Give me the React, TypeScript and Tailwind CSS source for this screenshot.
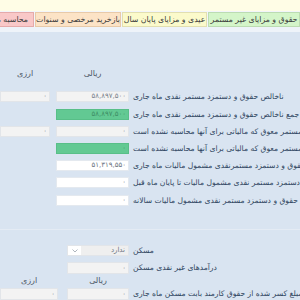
import React from "react";

const font = { fontFamily: '"DejaVu Sans", "Noto Sans", sans-serif' };

type Row = {
  mt: string;
  label: string;
  arz?: "gray" | "none";
  rial: "gray" | "green" | "white";
  value: string;
};

const rows: Row[] = [
  { mt: "mt-0", label: "ناخالص حقوق و دستمزد مستمر نقدی ماه جاری", arz: "gray", rial: "gray", value: "۵۸,۸۹۷,۵۰۰" },
  { mt: "mt-[7px]", label: "جمع ناخالص حقوق و دستمزد مستمر نقدی ماه جاری", arz: "none", rial: "green", value: "۵۸,۸۹۷,۵۰۰" },
  { mt: "mt-[6px]", label: "حقوق و دستمزد مستمر معوق که مالیاتی برای آنها محاسبه نشده است", arz: "gray", rial: "gray", value: "۰" },
  { mt: "mt-[6px]", label: "جمع حقوق و دستمزد مستمر معوق که مالیاتی برای آنها محاسبه نشده است", arz: "none", rial: "green", value: "۰" },
  { mt: "mt-[6px]", label: "حقوق و دستمزد مستمرنقدی مشمول مالیات ماه جاری", arz: "none", rial: "white", value: "۵۱,۳۱۹,۵۵۰" },
  { mt: "mt-[6px]", label: "جمع حقوق و دستمزد مستمر نقدی مشمول مالیات تا پایان ماه قبل", arz: "none", rial: "white", value: "۰" },
  { mt: "mt-[7px]", label: "حقوق و دستمزد مستمر نقدی مشمول مالیات سالانه", arz: "none", rial: "white", value: "۰" },
];

function Input({ kind, value, w }: { kind: "gray" | "green" | "white"; value: string; w: string }) {
  const cls =
    kind === "green"
      ? "bg-[#62c993] border-[#58bf88] text-[#3f8f66]"
      : kind === "white"
      ? "bg-white border-[#e4e9ef] text-[#6b7480]"
      : "bg-[#f3f3f3] border-[#e2e5e9] text-[#7a828c]";
  return (
    <div
      className={`${w} h-[11px] border ${cls} flex items-center justify-end pr-[2px] text-[7px] leading-none shrink-0`}
      dir="ltr"
    >
      {value}
    </div>
  );
}

const labelCls = "whitespace-nowrap text-[7.6px] text-[#2f4460] leading-none";
const tabCls = "shrink-0 h-[15px] border flex items-center justify-center text-[7.8px] text-[#3a3a3a] whitespace-nowrap overflow-hidden";

export default function App() {
  return (
    <div className="w-[300px] h-[300px] overflow-hidden bg-[#d9e4f1] flex flex-col" style={font}>
      <div className="h-[11px] bg-[#fffde6] shrink-0" />
      <div className="h-[16px] bg-[#f2f5fa] shrink-0 flex flex-row-reverse gap-[1px] pt-[1px] overflow-hidden">
        <div className={`w-[92px] bg-[#d4f5c9] border-[#bcdcb2] ${tabCls}`} dir="rtl">
          حقوق و مزایای غیر مستمر
        </div>
        <div className={`w-[85px] bg-[#fbfacb] border-[#e2dfb0] ${tabCls}`} dir="rtl">
          عیدی و مزایای پایان سال
        </div>
        <div className={`w-[86px] bg-[#fce3c6] border-[#e8caa8] ${tabCls}`} dir="rtl">
          بازخرید مرخصی و سنوات
        </div>
        <div className="bg-[#f9c8c8] border-[#e5aaaa] shrink-0 h-[15px] border flex items-center text-[7.8px] text-[#3a3a3a] whitespace-nowrap px-[5px]" dir="rtl">
          محاسبه مالیات حقوق
        </div>
      </div>
      <div className="h-[5px] bg-[#eef3f9] shrink-0" />

      <div className="flex-1 relative">
        <div className="flex mt-[37px] h-[10px] items-center text-[8px] text-[#4a5563]">
          <div className="w-[50px] flex justify-center" dir="rtl">ارزی</div>
          <div className="w-[6px]" />
          <div className="w-[73px] flex justify-center" dir="rtl">ریالی</div>
        </div>

        <div className="mt-[12px] flex flex-col">
          {rows.map((r, i) => (
            <div key={i} className={`flex items-center h-[11px] ${r.mt}`}>
              {r.arz === "gray" ? (
                <Input kind="gray" value="۰" w="w-[50px]" />
              ) : (
                <div className="w-[50px] shrink-0" />
              )}
              <div className="w-[6px] shrink-0" />
              <Input kind={r.rial} value={r.value} w="w-[73px]" />
              <div className="w-[4px] shrink-0" />
              <span className={labelCls} dir="rtl">
                {r.label}
              </span>
            </div>
          ))}
        </div>

        <div className="mt-[23px] border-t border-[#e4ebf4]" />

        <div className="mt-[15px] flex items-center h-[11px]">
          <div className="w-[67px] shrink-0" />
          <div className="w-[62px] h-[11px] shrink-0 border border-[#e2e5e9] bg-[#efefef] flex items-center">
            <div className="w-[13px] h-full bg-white flex items-center justify-center">
              <svg width="6" height="4" viewBox="0 0 6 4">
                <path d="M0.5 0.5 L3 3 L5.5 0.5" fill="none" stroke="#9aa3ad" strokeWidth="0.8" />
              </svg>
            </div>
            <div className="flex-1 text-right pr-[3px] text-[7px] text-[#6b7480] leading-none" dir="rtl">ندارد</div>
          </div>
          <div className="w-[4px] shrink-0" />
          <span className={labelCls} dir="rtl">مسکن</span>
        </div>

        <div className="mt-[6px] flex items-center h-[12px]">
          <div className="w-[67px] shrink-0" />
          <div className="w-[62px] h-[12px] shrink-0 border border-[#e2e5e9] bg-[#f3f3f3] flex items-center justify-end pr-[2px] text-[7px] text-[#7a828c] leading-none">۰</div>
          <div className="w-[4px] shrink-0" />
          <span className={labelCls} dir="rtl">درآمدهای غیر نقدی مسکن</span>
        </div>

        <div className="flex mt-[2px] h-[10px] items-center text-[8px] text-[#4a5563]">
          <div className="w-[58px] flex justify-center" dir="rtl">ارزی</div>
          <div className="w-[9px]" />
          <div className="w-[62px] flex justify-center" dir="rtl">ریالی</div>
        </div>

        <div className="mt-[2px] flex items-center h-[12px]">
          <div className="w-[58px] h-[12px] shrink-0 border border-[#e2e5e9] bg-[#f3f3f3] flex items-center justify-end pr-[2px] text-[7px] text-[#7a828c] leading-none">۰</div>
          <div className="w-[9px] shrink-0" />
          <div className="w-[62px] h-[12px] shrink-0 border border-[#e2e5e9] bg-[#f3f3f3] flex items-center justify-end pr-[2px] text-[7px] text-[#7a828c] leading-none">۰</div>
          <div className="w-[4px] shrink-0" />
          <span className={labelCls} dir="rtl">مبلغ کسر شده از حقوق کارمند بابت مسکن ماه جاری</span>
        </div>
      </div>
    </div>
  );
}
